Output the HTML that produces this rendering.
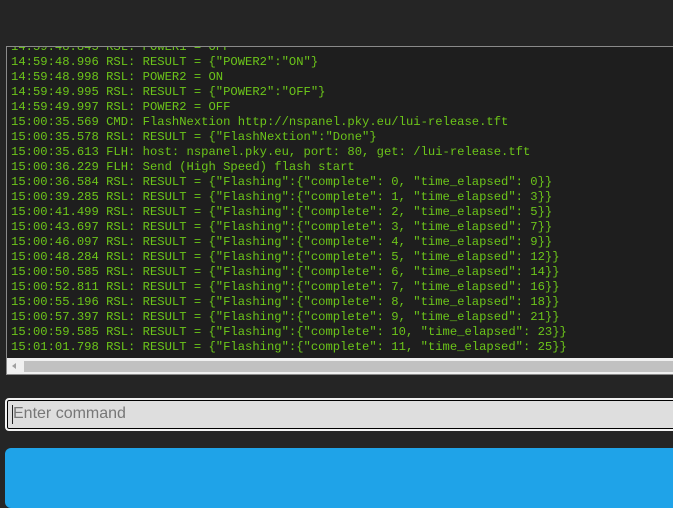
<!DOCTYPE html>
<html><head><style>
body{margin:0;width:673px;height:487px;background:#252525;overflow:hidden;position:relative;font-family:"Liberation Sans",sans-serif}
#con{position:absolute;left:6px;top:46px;width:680px;height:327px;border:1px solid #8a8a8a;background:#1e1e1e;overflow:hidden}
#txt{position:absolute;left:4px;top:-7px;font-family:"Liberation Mono",monospace;font-size:12.2px;line-height:15px;color:#6cc51a;white-space:pre}
#sb{position:absolute;left:0;top:311px;width:100%;height:16px;background:#f0f0f0}
#thumb{position:absolute;left:17px;top:3px;right:0;height:11px;background:#c1c1c1}
#arr{position:absolute;left:5px;top:5px;width:0;height:0;border-top:3px solid transparent;border-bottom:3px solid transparent;border-right:4px solid #a0a0a0}
#inp{position:absolute;left:5px;top:398px;width:680px;height:29px;border:2px solid #f2f2f2;border-radius:4px;background:#dedede;box-shadow:0 0 0 1px #000 inset}
#inp span{position:absolute;left:6px;top:5px;font-size:16px;color:#777}
#inp i{position:absolute;left:5px;top:5px;width:1px;height:19px;background:#222}
#btn{position:absolute;left:5px;top:448px;width:690px;height:60px;background:#1fa3e8;border-radius:6px}
</style></head><body>
<div id="con"><div id="txt">14:59:48.845 RSL: POWER1 = OFF
14:59:48.996 RSL: RESULT = {"POWER2":"ON"}
14:59:48.998 RSL: POWER2 = ON
14:59:49.995 RSL: RESULT = {"POWER2":"OFF"}
14:59:49.997 RSL: POWER2 = OFF
15:00:35.569 CMD: FlashNextion http://nspanel.pky.eu/lui-release.tft
15:00:35.578 RSL: RESULT = {"FlashNextion":"Done"}
15:00:35.613 FLH: host: nspanel.pky.eu, port: 80, get: /lui-release.tft
15:00:36.229 FLH: Send (High Speed) flash start
15:00:36.584 RSL: RESULT = {"Flashing":{"complete": 0, "time_elapsed": 0}}
15:00:39.285 RSL: RESULT = {"Flashing":{"complete": 1, "time_elapsed": 3}}
15:00:41.499 RSL: RESULT = {"Flashing":{"complete": 2, "time_elapsed": 5}}
15:00:43.697 RSL: RESULT = {"Flashing":{"complete": 3, "time_elapsed": 7}}
15:00:46.097 RSL: RESULT = {"Flashing":{"complete": 4, "time_elapsed": 9}}
15:00:48.284 RSL: RESULT = {"Flashing":{"complete": 5, "time_elapsed": 12}}
15:00:50.585 RSL: RESULT = {"Flashing":{"complete": 6, "time_elapsed": 14}}
15:00:52.811 RSL: RESULT = {"Flashing":{"complete": 7, "time_elapsed": 16}}
15:00:55.196 RSL: RESULT = {"Flashing":{"complete": 8, "time_elapsed": 18}}
15:00:57.397 RSL: RESULT = {"Flashing":{"complete": 9, "time_elapsed": 21}}
15:00:59.585 RSL: RESULT = {"Flashing":{"complete": 10, "time_elapsed": 23}}
15:01:01.798 RSL: RESULT = {"Flashing":{"complete": 11, "time_elapsed": 25}}</div>
<div id="sb"><div id="arr"></div><div id="thumb"></div></div></div>
<div id="inp"><i></i><span>Enter command</span></div>
<div id="btn"></div>
</body></html>
